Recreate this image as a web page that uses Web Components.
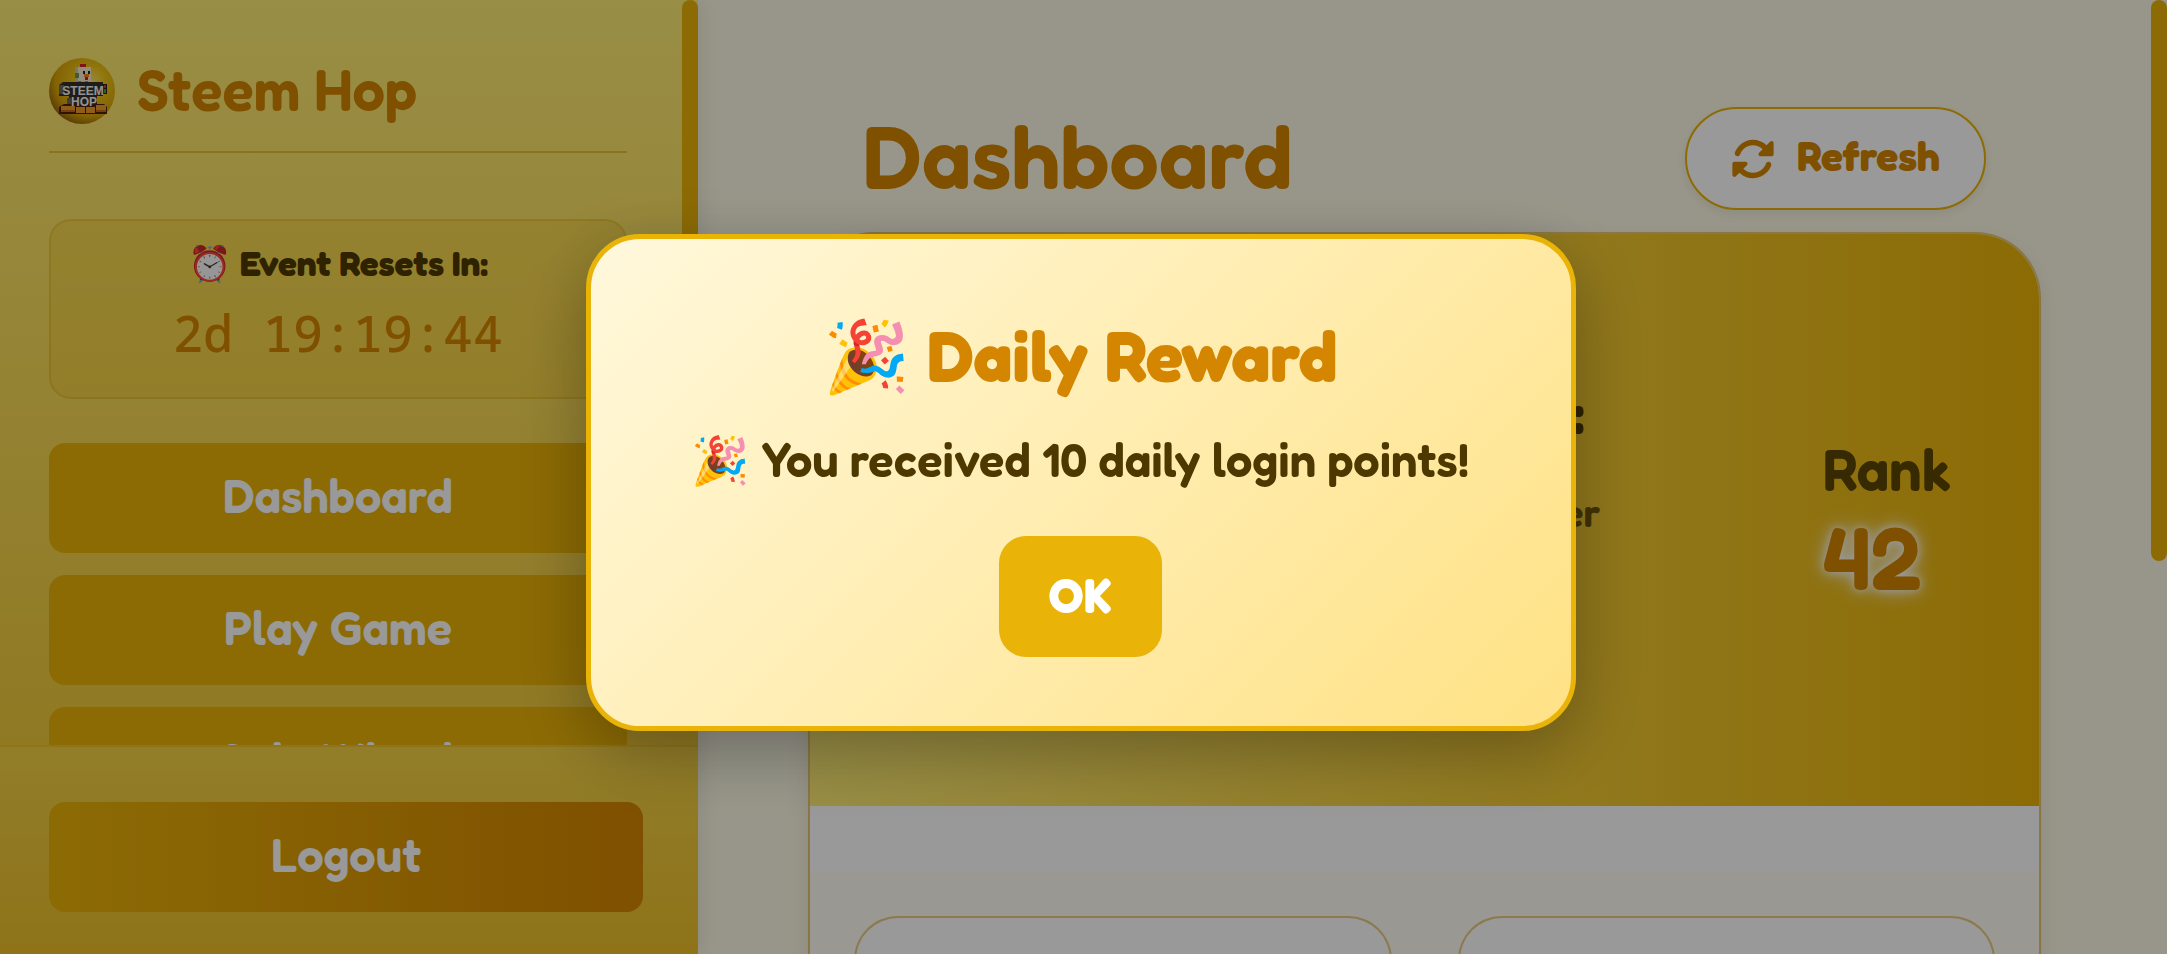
<!DOCTYPE html>
<html lang="en">
<head>
<meta charset="utf-8">
<meta name="viewport" content="width=device-width, initial-scale=1">
<title>Steem Hop</title>
<style>
  :root {
    --gold: #eab308;
    --amber: #d48600;
    --brown: #4d3900;
    --cream: #fefbe6;
    --line: rgba(212, 150, 8, 0.5);
  }
  body {
    margin: 0;
    height: 100vh;
    overflow: hidden;
    background: var(--cream);
    color: var(--brown);
    font-family: "Fredoka One", "Fredoka", "Lato", "Noto Color Emoji", sans-serif;
    font-weight: 600;
  }
</style>
</head>
<body>
<hop-app>
  <hop-sidebar slot="sidebar">
    <hop-brand slot="brand">Steem Hop</hop-brand>
    <hop-timer slot="top" time="2d 19:19:44">⏰ Event Resets In:</hop-timer>
    <hop-button slot="nav">Dashboard</hop-button>
    <hop-button slot="nav">Play Game</hop-button>
    <hop-button slot="nav">Spin Wheel</hop-button>
    <hop-button slot="footer" variant="logout">Logout</hop-button>
  </hop-sidebar>
  <hop-dashboard heading="Dashboard">
    <hop-profile rank="42">
      <span slot="name">Hi:</span>
      <span slot="role">Hopper</span>
    </hop-profile>
  </hop-dashboard>
  <hop-modal slot="modal" heading="🎉 Daily Reward">🎉 You received 10 daily login points!</hop-modal>
</hop-app>

<script>
class HopApp extends HTMLElement {
  constructor() {
    super();
    this.attachShadow({ mode: 'open' });
    this.shadowRoot.innerHTML = `
      <style>
      :host {
        display: grid;
        grid-template-columns: minmax(320px, 698px) minmax(0, 1fr);
        height: 100vh;
      }
      </style>
      <slot name="sidebar"></slot>
      <slot></slot>
      <slot name="modal"></slot>
    `;
  }
}

class HopSidebar extends HTMLElement {
  constructor() {
    super();
    this.attachShadow({ mode: 'open' });
    this.shadowRoot.innerHTML = `
      <style>
      :host {
        display: flex;
        flex-direction: column;
        min-height: 0;
        height: 100vh;
        background: linear-gradient(180deg, #ffed75, #edc02a);
        box-shadow: 4px 0 20px rgba(0, 0, 0, 0.08);
      }
      .scroll {
        flex: 1;
        min-height: 0;
        display: grid;
        grid-template-columns: minmax(0, 1fr) 16px;
        overflow: hidden;
      }
      .content {
        padding: 58px 55px 0 49px;
        min-height: 0;
      }
      .thumb {
        height: 96%;
        border-radius: 8px;
        background: var(--gold);
      }
      nav {
        display: flex;
        flex-direction: column;
        gap: 22px;
        margin-top: 44px;
      }
      footer {
        padding: 55px 55px 42px 49px;
        border-top: 2px solid rgba(234, 179, 8, 0.3);
        background: linear-gradient(180deg, rgba(255, 237, 117, 0.2), rgba(255, 237, 117, 0));
      }
      </style>
      <div class="scroll">
        <div class="content">
          <slot name="brand"></slot>
          <slot name="top"></slot>
          <nav><slot name="nav"></slot></nav>
        </div>
        <div class="thumb"></div>
      </div>
      <footer><slot name="footer"></slot></footer>
    `;
  }
}

class HopBrand extends HTMLElement {
  constructor() {
    super();
    this.attachShadow({ mode: 'open' });
    this.shadowRoot.innerHTML = `
      <style>
      :host {
        display: flex;
        align-items: center;
        gap: 22px;
        padding-bottom: 27px;
        border-bottom: 2px solid var(--line);
        color: var(--amber);
      }
      svg {
        flex: none;
        width: 66px;
        height: 66px;
      }
      h2 {
        margin: 0;
        padding-bottom: 4px;
        font-size: 58px;
        line-height: 62px;
        font-weight: inherit;
      }
      </style>
      <svg viewBox="0 0 66 66" role="img" aria-label="Steem Hop">
        <defs>
          <radialGradient id="ball" cx="0.62" cy="0.36" r="0.7">
            <stop offset="0" stop-color="#ffe766"/>
            <stop offset="0.35" stop-color="#f0c414"/>
            <stop offset="0.75" stop-color="#d9a408"/>
            <stop offset="1" stop-color="#8f5f10"/>
          </radialGradient>
        </defs>
        <circle cx="33" cy="33" r="33" fill="url(#ball)"/>
        <path d="M31 6h6v5h-6z" fill="#d0222c"/>
        <path d="M26 9h16v14H26z" fill="#f4ecd0"/>
        <path d="M26 9h3v14h-3z" fill="#cfc6a4"/>
        <path d="M26 15h4v5h-4z" fill="#6f9a4c"/>
        <path d="M34 13h2v3h-2zM39 13h2v3h-2z" fill="#222"/>
        <path d="M35 16h5v3h-5z" fill="#f58a1c"/>
        <path d="M36 19h3v3h-3z" fill="#c8202a"/>
        <path d="M29 23h3v3h-3zM36 23h3v3h-3z" fill="#e07a18"/>
        <path d="M10 27l4-3h40v14h-6v12H20V38H10z" fill="#34302c"/>
        <path d="M10 27h5v9h-5zM18 40h4v8h-4z" fill="#6b655c"/>
        <path d="M54 26h4v10h-4z" fill="#26221e"/>
        <path d="M55 27h2v3h-2z" fill="#e03028"/>
        <path d="M55 31h2v4h-2z" fill="#47a03a"/>
        <path d="M10 49l5-3h40l3 3v7H10z" fill="#4a2408"/>
        <path d="M12 48h14v6H12zM27 49h9v6h-9zM37 49h9v6h-9zM47 47h10v7H47z" fill="#f09a2c"/>
        <path d="M12 52h14v2H12zM47 52h10v2H47z" fill="#c86a18"/>
        <g fill="#f7f5ef" font-family="Liberation Sans, sans-serif" font-weight="700" font-size="12" text-anchor="middle">
          <text x="34" y="37">STEEM</text>
          <text x="35" y="48">HOP</text>
        </g>
      </svg>
      <h2><slot></slot></h2>
    `;
  }
}

class HopTimer extends HTMLElement {
  constructor() {
    super();
    this.attachShadow({ mode: 'open' });
  }

  connectedCallback() {
    this.shadowRoot.innerHTML = `
      <style>
      :host {
        display: block;
        margin-top: 66px;
        padding: 18px 20px 32px;
        border: 2px solid rgba(212, 160, 8, 0.3);
        border-radius: 22px;
        background: rgba(234, 179, 8, 0.2);
        text-align: center;
      }
      .label {
        font-size: 35px;
        line-height: 48px;
        font-weight: 700;
      }
      time {
        display: block;
        margin-top: 14px;
        font-family: "Noto Sans Mono", "DejaVu Sans Mono", monospace;
        font-weight: 500;
        font-size: 50px;
        line-height: 64px;
        color: var(--amber);
      }
      </style>
      <div class="label"><slot></slot></div>
      <time>${this.getAttribute('time')}</time>
    `;
  }
}

class HopButton extends HTMLElement {
  constructor() {
    super();
    this.attachShadow({ mode: 'open' });
    this.shadowRoot.innerHTML = `
      <style>
      :host {
        display: block;
      }
      button {
        display: block;
        width: 100%;
        height: 110px;
        padding: 0 0 4px;
        border: none;
        border-radius: 16px;
        background: var(--gold);
        color: white;
        font: inherit;
        font-size: 47px;
        line-height: 66px;
        cursor: pointer;
      }
      :host([variant="logout"]) button {
        background: linear-gradient(90deg, var(--gold), var(--amber));
      }
      </style>
      <button type="button"><slot></slot></button>
    `;
  }
}

class HopDashboard extends HTMLElement {
  constructor() {
    super();
    this.attachShadow({ mode: 'open' });
  }

  connectedCallback() {
    this.shadowRoot.innerHTML = `
      <style>
      :host {
        display: grid;
        grid-template-columns: minmax(0, 1fr) 16px;
        height: 100vh;
        overflow: hidden;
      }
      main {
        padding: 107px 110px 0;
      }
      header {
        display: flex;
        align-items: center;
        justify-content: space-between;
        padding: 0 55px;
        margin-bottom: 22px;
      }
      h1 {
        margin: 0;
        padding-bottom: 6px;
        font-size: 88px;
        line-height: 96px;
        font-weight: inherit;
        color: var(--amber);
      }
      button {
        display: flex;
        align-items: center;
        gap: 22px;
        height: 103px;
        padding: 0 44px;
        border: 2px solid var(--gold);
        border-radius: 52px;
        background: white;
        box-shadow: 0 4px 12px rgba(0, 0, 0, 0.08);
        color: var(--amber);
        font: inherit;
        font-size: 41px;
        font-weight: 700;
        cursor: pointer;
      }
      button svg {
        width: 44px;
        height: 44px;
        fill: currentColor;
      }
      button span {
        padding-bottom: 6px;
      }
      .thumb {
        height: 561px;
        border-radius: 8px;
        background: var(--gold);
      }
      </style>
      <main>
        <header>
          <h1>${this.getAttribute('heading')}</h1>
          <button type="button">
            <svg viewBox="0 0 512 512" aria-hidden="true"><path d="M142.900 142.900c62.200-62.200 162.700-62.500 225.300-1L327 183c-6.900 6.900-8.900 17.200-5.200 26.200s12.500 14.800 22.200 14.800H472c13.300 0 24-10.700 24-24V72c0-9.700-5.800-18.500-14.800-22.200s-19.300-1.700-26.200 5.200L413.400 96.600c-87.600-86.500-228.700-86.200-315.800 1C73.200 122 55.600 150.700 44.800 181.400c-5.900 16.700 2.900 34.900 19.500 40.800s34.900-2.900 40.800-19.500c7.700-21.800 20.200-42.300 37.800-59.800zM16 312V440c0 9.700 5.800 18.500 14.800 22.200s19.300 1.700 26.200-5.200l41.600-41.600c87.600 86.500 228.700 86.200 315.800-1c24.400-24.400 42.100-53.100 52.900-83.700c5.900-16.700-2.900-34.900-19.500-40.800s-34.900 2.900-40.800 19.500c-7.700 21.800-20.200 42.300-37.800 59.800c-62.200 62.200-162.700 62.500-225.300 1L185 329c6.900-6.900 8.900-17.200 5.200-26.200s-12.500-14.800-22.200-14.800H40c-13.300 0-24 10.700-24 24z"/></svg>
            <span>Refresh</span>
          </button>
        </header>
        <slot></slot>
      </main>
      <div class="thumb"></div>
    `;
  }
}

class HopProfile extends HTMLElement {
  constructor() {
    super();
    this.attachShadow({ mode: 'open' });
  }

  connectedCallback() {
    this.shadowRoot.innerHTML = `
      <style>
      :host {
        display: block;
        overflow: hidden;
        border: 2px solid var(--line);
        border-radius: 66px 66px 0 0;
        background: white;
        background-clip: padding-box;
        box-shadow: 0 8px 24px rgba(0, 0, 0, 0.08);
      }
      .top {
        display: flex;
        align-items: center;
        justify-content: flex-end;
        gap: 222px;
        height: 572px;
        padding-right: 88px;
        box-sizing: border-box;
        background: linear-gradient(90deg, #ffed75, var(--gold));
      }
      .info {
        display: flex;
        flex-direction: column;
        align-items: flex-end;
        gap: 30px;
        padding-bottom: 126px;
      }
      .name {
        padding-right: 16px;
        font-size: 57px;
        line-height: 80px;
        font-weight: 700;
      }
      .role {
        font-size: 40px;
        line-height: 60px;
        opacity: 0.8;
      }
      .rank {
        padding-bottom: 6px;
      }
      .label {
        font-size: 58px;
        line-height: 80px;
        opacity: 0.9;
      }
      .value {
        font-size: 88px;
        line-height: 96px;
        color: var(--amber);
        text-shadow: 0 0 20px white, 0 0 10px white;
      }
      .stats {
        display: grid;
        grid-template-columns: 1fr 1fr;
        gap: 66px;
        margin-top: 66px;
        padding: 44px;
        background: #fffdf4;
      }
      .card {
        height: 220px;
        border: 2px solid var(--line);
        border-radius: 44px;
        background: white;
      }
      </style>
      <section class="top">
        <div class="info">
          <div class="name"><slot name="name"></slot></div>
          <div class="role"><slot name="role"></slot></div>
        </div>
        <div class="rank">
          <div class="label">Rank</div>
          <div class="value">${this.getAttribute('rank')}</div>
        </div>
      </section>
      <section class="stats">
        <div class="card"></div>
        <div class="card"></div>
      </section>
    `;
  }
}

class HopModal extends HTMLElement {
  constructor() {
    super();
    this.attachShadow({ mode: 'open' });
    this.close = this.close.bind(this);
  }

  close() {
    this.remove();
  }

  connectedCallback() {
    this.shadowRoot.innerHTML = `
      <style>
      :host {
        position: fixed;
        inset: 0;
        z-index: 10;
        display: flex;
        align-items: center;
        justify-content: center;
        padding: 11px 6px 0 0;
        background: rgba(0, 0, 0, 0.4);
      }
      .dialog {
        display: flex;
        flex-direction: column;
        align-items: center;
        box-sizing: border-box;
        width: 90%;
        max-width: 990px;
        padding: 66px 66px 69px;
        border: 5px solid var(--gold);
        border-radius: 54px;
        background: linear-gradient(135deg, #fff8dc, #ffe285);
        box-shadow: 0 20px 70px rgba(0, 0, 0, 0.3);
        text-align: center;
      }
      h2 {
        margin: 0;
        font-size: 70px;
        line-height: 102px;
        font-weight: 700;
        color: var(--amber);
      }
      p {
        margin: 20px 0 43px;
        font-size: 47px;
        line-height: 66px;
      }
      button {
        height: 121px;
        padding: 0 50px 4px;
        border: none;
        border-radius: 27px;
        background: var(--gold);
        color: white;
        font: inherit;
        font-size: 48px;
        font-weight: 700;
        cursor: pointer;
      }
      </style>
      <div class="dialog" role="dialog" aria-modal="true" aria-labelledby="title">
        <h2 id="title">${this.getAttribute('heading')}</h2>
        <p><slot></slot></p>
        <button type="button">OK</button>
      </div>
    `;
    this.shadowRoot.querySelector('button').addEventListener('click', this.close);
  }
}

customElements.define('hop-app', HopApp);
customElements.define('hop-sidebar', HopSidebar);
customElements.define('hop-brand', HopBrand);
customElements.define('hop-timer', HopTimer);
customElements.define('hop-button', HopButton);
customElements.define('hop-dashboard', HopDashboard);
customElements.define('hop-profile', HopProfile);
customElements.define('hop-modal', HopModal);
</script>
</body>
</html>
